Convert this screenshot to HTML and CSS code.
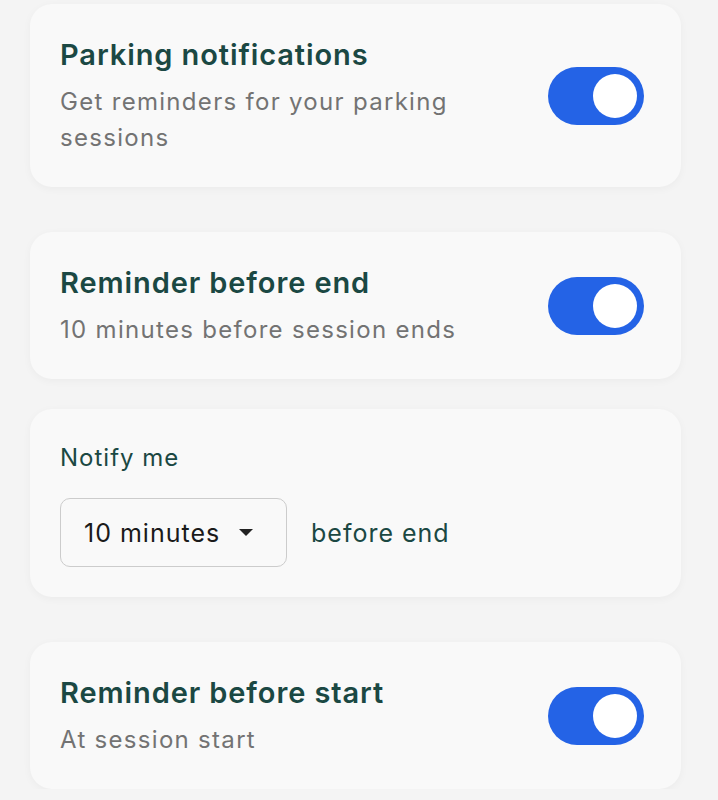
FILE: index.html
```html
<!DOCTYPE html>
<html lang="en">
<head>
    <meta charset="UTF-8">
    <meta name="viewport" content="width=device-width, initial-scale=1.0">
    <title>Parking notifications</title>
    <link rel="stylesheet" href="styles.css">
</head>
<body>

    <div class="settings">

        <div class="card card-row">
            <div class="card-text">
                <h2 class="card-title">Parking notifications</h2>
                <p class="card-sub">Get reminders for your parking sessions</p>
            </div>
            <label class="toggle">
                <input type="checkbox" checked>
                <span class="slider"></span>
            </label>
        </div>

        <div class="group">
            <div class="card card-row">
                <div class="card-text">
                    <h2 class="card-title">Reminder before end</h2>
                    <p class="card-sub">10 minutes before session ends</p>
                </div>
                <label class="toggle">
                    <input type="checkbox" checked>
                    <span class="slider"></span>
                </label>
            </div>

            <div class="card">
                <p class="notify-label">Notify me</p>
                <div class="notify-row">
                    <button class="select" type="button">
                        <span>10 minutes</span>
                        <span class="caret"></span>
                    </button>
                    <span class="notify-after">before end</span>
                </div>
            </div>
        </div>

        <div class="card card-row">
            <div class="card-text">
                <h2 class="card-title">Reminder before start</h2>
                <p class="card-sub">At session start</p>
            </div>
            <label class="toggle">
                <input type="checkbox" checked>
                <span class="slider"></span>
            </label>
        </div>

    </div>

</body>
</html>
```

FILE: styles.css
```css
body {
    margin: 0;
    background-color: #f4f4f4;
    font-family: Inter, "Noto Sans", sans-serif;
}
.settings {
    display: flex;
    flex-direction: column;
    gap: 45px;
    padding: 4px 37px 0 30px;
}
.group {
    display: flex;
    flex-direction: column;
    gap: 30px;
}
.card {
    background-color: #f9f9f9;
    border-radius: 22px;
    padding: 31px 30px 30px;
    box-shadow: 0 2px 8px rgba(0,0,0,0.04);
}
.card-row {
    display: flex;
    align-items: center;
    justify-content: space-between;
    padding-bottom: 31px;
    padding-right: 37px;
}
.card-text {
    max-width: 430px;
}
.card-title {
    margin: 0;
    color: #1b4843;
    font-size: 29px;
    font-weight: 600;
    letter-spacing: 0.9px;
    line-height: 40px;
}
.card-sub {
    margin: 9px 0 0;
    color: #737373;
    font-size: 24px;
    letter-spacing: 1.3px;
    line-height: 36px;
}
.toggle {
    position: relative;
    width: 96px;
    height: 58px;
    flex-shrink: 0;
}
.toggle input {
    display: none;
}
.slider {
    position: absolute;
    inset: 0;
    background-color: #2463e6;
    border-radius: 29px;
}
.slider::after {
    content: "";
    position: absolute;
    top: 7px;
    right: 7px;
    width: 44px;
    height: 44px;
    border-radius: 50%;
    background-color: white;
}
.notify-label {
    margin: 0;
    color: #1b4843;
    font-size: 24px;
    letter-spacing: 1px;
    line-height: 36px;
}
.notify-row {
    display: flex;
    align-items: center;
    gap: 24px;
    margin-top: 22px;
}
.select {
    display: flex;
    align-items: center;
    gap: 19px;
    width: 227px;
    height: 69px;
    padding: 0 23px;
    background-color: #f9f9f9;
    border: 1.5px solid #cccccc;
    border-radius: 10px;
    font-family: inherit;
    font-size: 25px;
    letter-spacing: 1px;
    color: #1a1a1a;
}
.caret {
    width: 0;
    height: 0;
    border-left: 7px solid transparent;
    border-right: 7px solid transparent;
    border-top: 7px solid #222;
}
.notify-after {
    color: #1b4843;
    font-size: 25px;
    letter-spacing: 1px;
}
```
